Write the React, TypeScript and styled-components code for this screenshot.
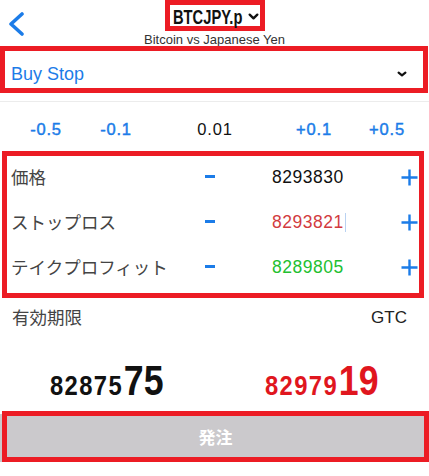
import React from "react";
import styled, { createGlobalStyle } from "styled-components";

const Global = createGlobalStyle`
  html, body { margin: 0; padding: 0; background: #fff; }
  body { font-family: "Liberation Sans", "Noto Sans CJK JP", sans-serif; }
  * { box-sizing: border-box; }
`;

const MARK = "#ec1c24";
const BLUE = "#1c7ce8";

const Page = styled.div`
  width: 429px;
  display: flex;
  flex-direction: column;
`;

const Header = styled.header`
  height: 46px;
  display: grid;
  grid-template-columns: 1fr auto 1fr;
`;

const BackButton = styled.div`
  padding: 12px 0 0 8px;
  color: ${BLUE};
`;

const TitleCol = styled.div`
  display: flex;
  flex-direction: column;
  align-items: center;
`;

const TitleBox = styled.div`
  width: 100px;
  height: 31px;
  border: 5px solid ${MARK};
  display: flex;
  align-items: center;
  justify-content: center;
  gap: 5px;
  padding: 1px 0 0 3px;
`;

const SymbolSlot = styled.span`
  display: inline-block;
  width: 70px;
  height: 21px;
  overflow: visible;
`;

const Symbol = styled.span`
  display: inline-block;
  font-family: "Liberation Sans", sans-serif;
  font-weight: 700;
  font-size: 21px;
  color: #111;
  line-height: 21px;
  white-space: nowrap;
  transform: scaleX(0.7);
  transform-origin: left center;
`;

const Subtitle = styled.div`
  margin-top: 2px;
  font-size: 13px;
  line-height: 13px;
  color: #333;
  white-space: nowrap;
`;

const SelectBox = styled.div`
  height: 47px;
  width: 428px;
  border: 5px solid ${MARK};
  display: flex;
  align-items: center;
  justify-content: space-between;
  padding: 9px 16px 0 6px;
`;

const SelectText = styled.span`
  font-size: 18px;
  color: ${BLUE};
`;

const Separator = styled.div`
  margin-top: 8px;
  height: 1px;
  background: #ececec;
`;

const Steps = styled.div`
  height: 49px;
  padding-top: 5px;
  display: grid;
  grid-template-columns: 92px 48px 1fr 62px 84px;
  align-items: center;
  justify-items: center;
`;

const Step = styled.span<{ $plain?: boolean }>`
  font-size: 16.5px;
  letter-spacing: 0.8px;
  color: ${(p) => (p.$plain ? "#111" : BLUE)};
  -webkit-text-stroke: ${(p) => (p.$plain ? "0" : `0.45px ${BLUE}`)};
  padding-left: ${(p) => (p.$plain ? "7px" : "0")};
`;

const FieldBox = styled.div`
  margin: 0 5px 0 2px;
  height: 147px;
  border: 5px solid ${MARK};
  padding: 0 0 2px 4px;
  display: flex;
  flex-direction: column;
`;

const FieldRow = styled.div`
  height: 45px;
  display: grid;
  grid-template-columns: 189px 20px 1fr 23px;
  align-items: center;
`;

const Label = styled.span`
  font-family: "Noto Sans CJK JP", sans-serif;
  font-size: 17.5px;
  line-height: 20px;
  margin-top: -3px;
  color: #444;
  white-space: nowrap;
`;

const Minus = styled.span`
  justify-self: center;
  width: 10px;
  height: 3px;
  background: ${BLUE};
  margin-top: -4px;
`;

const Value = styled.span<{ $color: string }>`
  padding-left: 52px;
  margin-top: -2px;
  font-size: 17.5px;
  letter-spacing: 0.5px;
  color: ${(p) => p.$color};
  display: flex;
  align-items: center;
`;

const Caret = styled.span`
  display: inline-block;
  width: 1.5px;
  height: 19px;
  margin-left: 1px;
  background: #b9d2f2;
`;

const PlusBtn = styled.span`
  justify-self: end;
  margin: -3px 1px 0 0;
  display: flex;
`;

const ExpiryRow = styled.div`
  height: 40px;
  display: flex;
  align-items: center;
  justify-content: space-between;
  padding: 0 22px 0 12px;
`;

const Gtc = styled.span`
  font-size: 17px;
  color: #222;
`;

const Prices = styled.div`
  height: 73px;
  padding-top: 23px;
  display: grid;
  grid-template-columns: 1fr 1fr;
  justify-items: center;
  align-items: start;
`;

const Price = styled.div<{ $color: string }>`
  font-family: "Liberation Sans", sans-serif;
  font-weight: 700;
  color: ${(p) => p.$color};
  line-height: 40px;
  white-space: nowrap;
  transform: scaleX(0.85);
  transform-origin: center;
`;

const Small = styled.span`
  font-size: 28px;
  letter-spacing: 1.6px;
`;

const Big = styled.span`
  font-size: 42px;
  letter-spacing: 0px;
  margin-left: 1px;
`;

const OrderBar = styled.div`
  margin-top: 3px;
  height: 48px;
  background: #cbc9cc;
  display: flex;
`;

const OrderButton = styled.button`
  flex: 1;
  margin: -3px 0 0 2px;
  height: 51px;
  border: 5px solid ${MARK};
  background: transparent;
  color: #fff;
  font-family: "Noto Sans CJK JP", sans-serif;
  font-weight: 700;
  font-size: 17px;
  padding: 0;
`;

const Chevron = ({ w, h, color, sw }: { w: number; h: number; color: string; sw: number }) => (
  <svg width={w} height={h} viewBox={`0 0 ${w} ${h}`} fill="none" style={{ flexShrink: 0 }}>
    <polyline
      points={`${sw / 2 + 0.5},${sw / 2 + 0.5} ${w / 2},${h - sw / 2 - 0.5} ${w - sw / 2 - 0.5},${sw / 2 + 0.5}`}
      stroke={color}
      strokeWidth={sw}
      strokeLinecap="round"
      strokeLinejoin="round"
    />
  </svg>
);

const BackIcon = () => (
  <svg width="17" height="24" viewBox="0 0 17 24" fill="none">
    <polyline points="14,2 3,12 14,22" stroke={BLUE} strokeWidth="3.6" strokeLinecap="round" strokeLinejoin="round" />
  </svg>
);

const PlusIcon = () => (
  <svg width="17" height="17" viewBox="0 0 17 17" fill="none">
    <path d="M8.5 0.5V16.5M0.5 8.5H16.5" stroke={BLUE} strokeWidth="2.4" />
  </svg>
);

const fields = [
  { label: "価格", value: "8293830", color: "#111", caret: false },
  { label: "ストップロス", value: "8293821", color: "#d23b40", caret: true },
  { label: "テイクプロフィット", value: "8289805", color: "#22c02f", caret: false },
];

export default function App() {
  return (
    <Page>
      <Global />
      <Header>
        <BackButton>
          <BackIcon />
        </BackButton>
        <TitleCol>
          <TitleBox>
            <SymbolSlot>
              <Symbol>BTCJPY.p</Symbol>
            </SymbolSlot>
            <Chevron w={11} h={7} color="#111" sw={2.4} />
          </TitleBox>
          <Subtitle>Bitcoin vs Japanese Yen</Subtitle>
        </TitleCol>
        <div />
      </Header>

      <SelectBox>
        <SelectText>Buy Stop</SelectText>
        <Chevron w={10} h={6} color="#111" sw={2.2} />
      </SelectBox>

      <Separator />

      <Steps>
        <Step>-0.5</Step>
        <Step>-0.1</Step>
        <Step $plain>0.01</Step>
        <Step>+0.1</Step>
        <Step>+0.5</Step>
      </Steps>

      <FieldBox>
        {fields.map((f) => (
          <FieldRow key={f.label}>
            <Label>{f.label}</Label>
            <Minus />
            <Value $color={f.color}>
              {f.value}
              {f.caret && <Caret />}
            </Value>
            <PlusBtn>
              <PlusIcon />
            </PlusBtn>
          </FieldRow>
        ))}
      </FieldBox>

      <ExpiryRow>
        <Label>有効期限</Label>
        <Gtc>GTC</Gtc>
      </ExpiryRow>

      <Prices>
        <Price $color="#111">
          <Small>82875</Small>
          <Big>75</Big>
        </Price>
        <Price $color="#e0161e">
          <Small>82979</Small>
          <Big>19</Big>
        </Price>
      </Prices>

      <OrderBar>
        <OrderButton>発注</OrderButton>
      </OrderBar>
    </Page>
  );
}
